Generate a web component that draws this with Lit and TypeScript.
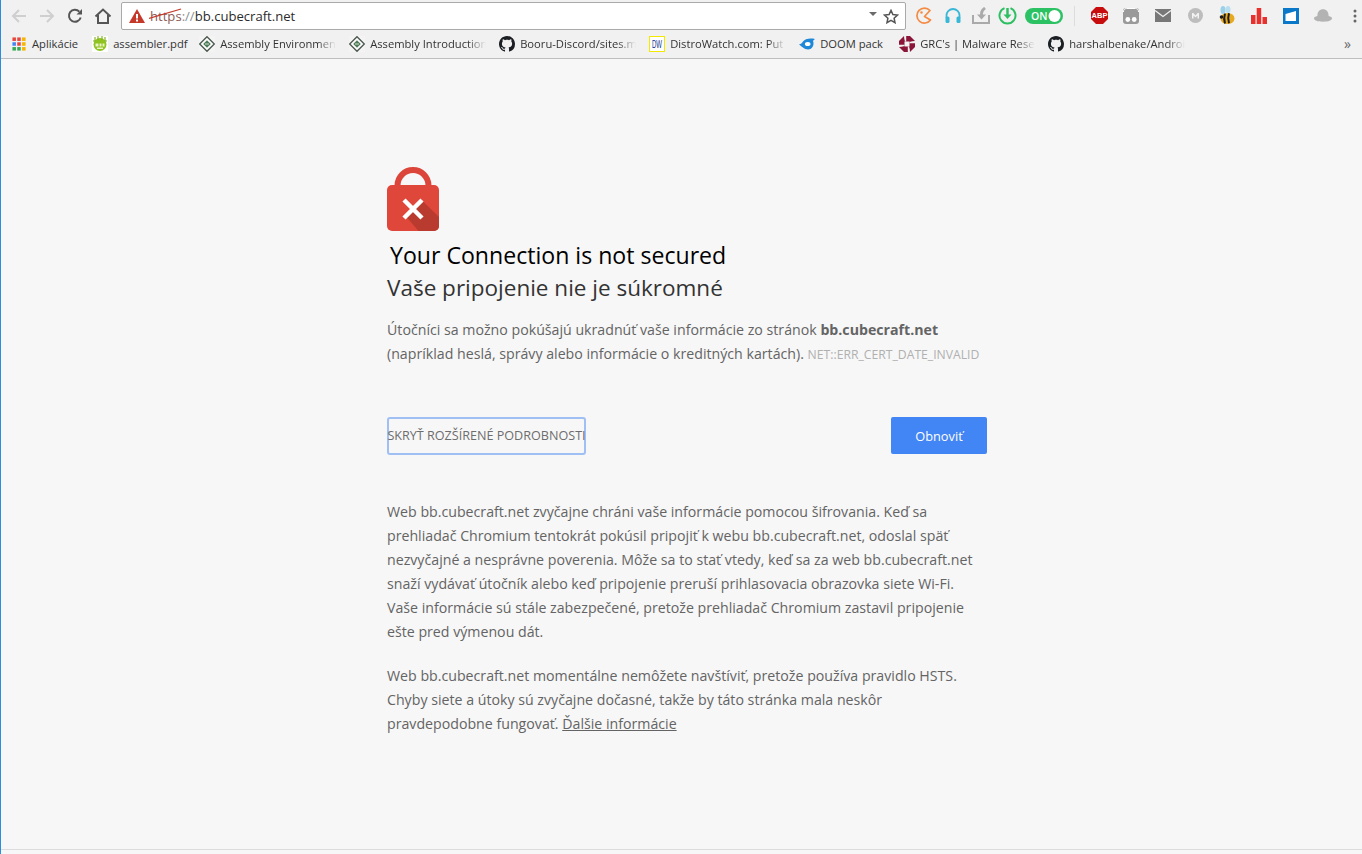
import { LitElement, html, css, svg } from "lit";
import { customElement } from "lit/decorators.js";

const GH = "M8 0C3.58 0 0 3.58 0 8c0 3.54 2.29 6.53 5.47 7.59.4.07.55-.17.55-.38 0-.19-.01-.82-.01-1.49-2.01.37-2.53-.49-2.69-.94-.09-.23-.48-.94-.82-1.13-.28-.15-.68-.52-.01-.53.63-.01 1.08.58 1.23.82.72 1.21 1.87.87 2.33.66.07-.52.28-.87.51-1.07-1.78-.2-3.64-.89-3.64-3.95 0-.87.31-1.59.82-2.15-.08-.2-.36-1.02.08-2.12 0 0 .67-.21 2.2.82.64-.18 1.32-.27 2-.27.68 0 1.36.09 2 .27 1.53-1.04 2.2-.82 2.2-.82.44 1.1.16 1.92.08 2.12.51.56.82 1.27.82 2.15 0 3.07-1.87 3.75-3.65 3.95.29.25.54.73.54 1.48 0 1.07-.01 1.93-.01 2.2 0 .21.15.46.55.38A8.013 8.013 0 0016 8c0-4.42-3.58-8-8-8z";

const fav = {
  apps: svg`${[0, 1, 2].flatMap((r) => [0, 1, 2].map((c) => svg`<rect x=${c * 5.5 + 0.5} y=${r * 5.5 + 0.5} width="4" height="4" fill=${[["#e8453c", "#e8453c", "#f4b400"], ["#4285f4", "#e8453c", "#f4b400"], ["#34a853", "#34a853", "#f4b400"]][r][c]}/>`))}`,
  asm: svg`<rect width="16" height="16" fill="#fff"/><circle cx="8" cy="8.500" r="6.500" fill="#8fc31f"/><path d="M3 1v4M6 0v4M10 0v4M13 1v4M1 5h2M13 5h2" stroke="#7fae1a" stroke-width="1.100" fill="none"/><path d="M3.500 7.500h3v3h-3zM7.500 7.500h2v3h-2zM10.500 7.500h2v3h-2zM5 11.500h6v1.500H5z" fill="#e9f4c8"/>`,
  dia: svg`<rect width="16" height="16" fill="#f4f4f4"/><path d="M8 .7 15.300 8 8 15.300.7 8z" fill="#fff" stroke="#4d5a50" stroke-width="1.400"/><path d="M8 4.200 11.800 8 8 11.800 4.200 8z" fill="#4f7a58"/><path d="M6 8h4" stroke="#cfe0d0" stroke-width="1"/>`,
  gh: svg`<path fill="#1b1f23" d=${GH}/>`,
  dw: svg`<rect x=".5" y=".5" width="15" height="15" fill="#fff" stroke="#f5e800" stroke-width="1"/><text x="3" y="12" textLength="10" lengthAdjust="spacingAndGlyphs" font-family="Liberation Sans, sans-serif" font-size="10.500" fill="#0d2f8f">DW</text>`,
  doom: svg`<path fill="#1e88d8" d="M0 8.500c2-.5 3-1.500 4-3C6 3 10 2 16 3c-1 .8-1.600 1.400-2 2 1.600 3.500-.5 8.500-5 8.500-3.500 0-6-3-9-5z"/><ellipse cx="8.700" cy="8" rx="2.800" ry="2" fill="#fff"/>`,
  grc: svg`<path fill="#8a1538" d="M5 0h6l5 5v6l-5 5H5l-5-5V5z"/><path fill="#f1f1f1" d="M5.500 5.500h5v5h-5zM10.500 5.500 16 5v1.500zM10.500 10.500 11 16H9.500zM5.500 10.500 0 11V9.500zM5.500 5.500 5 0h1.500z"/><path fill="#f1f1f1" d="M6 5.500 6 0h1.200v5.500zM10.500 6H16v1.200h-5.500zM10 10.500V16H8.800v-5.500zM5.500 10H0V8.800h5.500z"/>`,
};

const bookmarks: [keyof typeof fav, string, number, boolean][] = [
  ["asm", "assembler.pdf", 73, false],
  ["dia", "Assembly Environmen", 116, true],
  ["dia", "Assembly Introduction", 116, true],
  ["gh", "Booru-Discord/sites.m", 116, true],
  ["dw", "DistroWatch.com: Put", 116, true],
  ["doom", "DOOM pack", 66, false],
  ["grc", "GRC's | Malware Resea", 115, true],
  ["gh", "harshalbenake/Androi", 116, true],
];

@customElement("app-root")
export class AppRoot extends LitElement {
  static styles = css`
    :host {
      display: flex;
      flex-direction: column;
      width: 1362px;
      height: 854px;
      overflow: hidden;
      background: #f7f7f7;
      font-family: "Open Sans", "Noto Sans", sans-serif;
      box-sizing: border-box;
      border-left: 1px solid #2b8ce0;
    }
    .toolbar {
      display: flex;
      align-items: center;
      height: 31px;
      flex: none;
      background: #f1f1f1;
      padding-left: 4px;
    }
    .nav {
      width: 28px;
      height: 28px;
      display: flex;
      align-items: center;
      justify-content: center;
      flex: none;
    }
    .omni {
      flex: none;
      box-sizing: border-box;
      width: 785px;
      height: 28px;
      margin-left: 4px;
      margin-top: 1px;
      background: #fff;
      border: 1px solid #a9a9a9;
      border-radius: 2px;
      display: flex;
      align-items: center;
      padding: 0 6px 0 7px;
      font-size: 13.100px;
    }
    .scheme {
      position: relative;
      margin-left: 5px;
      color: #8c5a55;
    }
    .scheme svg { position: absolute; left: -1px; top: 1px; }
    .sep { color: #8a8f99; }
    .host { color: #2b2b2b; }
    .spacer { flex: 1; }
    .caret {
      width: 0;
      height: 0;
      border: 4px solid transparent;
      border-top: 4px solid #6a6a6a;
      border-bottom: 0;
      margin: 0 6px 4px 0;
    }
    .ext { display: flex; align-items: center; justify-content: center; flex: none; height: 28px; width: 28px; }
    .e-first { margin-left: 3px; }
    .e-gap2 { margin-left: 2px; }
    .e-nar { width: 24px; }
    .toggle { width: 38px; margin-left: 6px; }
    .divider { width: 1px; height: 20px; background: #dcdcdc; margin: 0 8px 0 11px; flex: none; }
    .wide { width: 32px; }
    .dots { width: 12px; margin-left: 10px; }
    .bm {
      display: flex;
      align-items: center;
      height: 25px;
      padding-bottom: 2px;
      flex: none;
      background: #f1f1f1;
      border-bottom: 1px solid #bdbdbd;
      padding-left: 11px;
      font-size: 11.200px;
      color: #333;
    }
    .bm-item { display: flex; align-items: center; gap: 5px; margin-right: 13px; flex: none; }
    .apps { gap: 6px; margin-right: 14px; }
    .bm-label { white-space: nowrap; flex: none; }
    .fade {
      -webkit-mask-image: linear-gradient(90deg, #000 84%, transparent 100%);
      mask-image: linear-gradient(90deg, #000 84%, transparent 100%);
    }
    .chev { margin-left: auto; margin-right: 11px; color: #666; font-size: 14px; }
    main {
      flex: 1;
      min-height: 0;
      padding: 108px 0 0 386px;
      border-bottom: 1px solid #dcdcdc;
      margin-bottom: 4px;
      color: #646464;
      font-size: 14.180px;
      line-height: 24px;
    }
    .wrap { width: 600px; }
    .lock { display: block; }
    h1 {
      margin: 8px 0 0 3px;
      font-size: 23.100px;
      line-height: 33px;
      font-weight: 400;
      color: #000;
      white-space: nowrap;
    }
    h2 {
      margin: 0;
      font-size: 22.500px;
      line-height: 32px;
      font-weight: 400;
      color: #333;
      white-space: nowrap;
    }
    .lead { margin: 14px 0 0; white-space: nowrap; }
    .lead b { font-weight: 700; }
    .code { font-size: 12.200px; color: #b0b0b0; }
    .actions { display: flex; justify-content: space-between; align-items: flex-start; margin-top: 50px; }
    .detail {
      box-sizing: border-box;
      width: 199px;
      height: 38px;
      border: 2px solid #9fbff5;
      border-radius: 3px;
      display: flex;
      align-items: center;
      justify-content: center;
      font-size: 12.600px;
      color: #6d6d6d;
      white-space: nowrap;
    }
    .reload {
      width: 96px;
      height: 37px;
      border-radius: 2px;
      background: #4285f4;
      color: #fff;
      display: flex;
      align-items: center;
      justify-content: center;
      font-size: 12.800px;
      font-weight: 500;
    }
    .body { margin: 45px 0 0; white-space: nowrap; }
    .body + .body { margin-top: 20px; }
    a { color: inherit; text-decoration: underline; }
  `;

  render() {
    return html`
      <div class="toolbar">
        <div class="nav">
          <svg width="18" height="18" viewBox="0 0 18 18" fill="none" stroke="#cfcfcf" stroke-width="2"><path d="M16 9H3M9 3 3 9l6 6"/></svg>
        </div>
        <div class="nav">
          <svg width="18" height="18" viewBox="0 0 18 18" fill="none" stroke="#cfcfcf" stroke-width="2"><path d="M2 9h13M9 3l6 6-6 6"/></svg>
        </div>
        <div class="nav">
          <svg width="16" height="16" viewBox="0 0 16 16" fill="none"><path d="M13.700 9.500A6 6 0 1 1 12.300 3.600" stroke="#555" stroke-width="2"/><path d="M9.500 6.500H15V1z" fill="#555"/></svg>
        </div>
        <div class="nav">
          <svg width="18" height="18" viewBox="0 0 18 18" fill="none" stroke="#555" stroke-width="2"><path d="M1.500 9.500 9 2.500l7.500 7M4 8v8h10V8"/></svg>
        </div>
        <div class="omni">
          <svg width="16" height="14" viewBox="0 0 16 14"><path d="M8 0l8 14H0z" fill="#c5392b"/><path d="M7 5h2v4.500H7zM7 10.500h2v2H7z" fill="#fff"/></svg>
          <span class="scheme">https<svg width="34" height="12" viewBox="0 0 34 12" fill="none"><path d="M0 10.500 32 1" stroke="#c5392b" stroke-width="1.300"/></svg></span><span class="sep">://</span><span class="host">bb.cubecraft.net</span>
          <span class="spacer"></span>
          <span class="caret"></span>
          <svg width="16" height="15" viewBox="0 0 16 15" fill="none"><path d="M8 1.400l1.900 4.200 4.600.5-3.400 3.100.9 4.500L8 11.400l-4 2.300.9-4.500L1.500 6.100l4.600-.5z" stroke="#555" stroke-width="1.500"/></svg>
        </div>
        <div class="ext e-first">
          <svg width="17" height="17" viewBox="0 0 17 17" fill="none"><path d="M15 3.500A7.500 7.500 0 1 0 15.500 13L9.500 9.500z" stroke="#f58a42" stroke-width="1.700" stroke-linejoin="round"/><circle cx="6.500" cy="5.500" r="1.200" fill="#f58a42"/></svg>
        </div>
        <div class="ext e-gap2">
          <svg width="18" height="17" viewBox="0 0 17 17" fill="none"><path d="M2 11V8.500a6.500 6.500 0 0 1 13 0V11" stroke="#39b7d6" stroke-width="1.800"/><rect x="1" y="9.500" width="4" height="6.500" rx="1.500" fill="#39b7d6"/><rect x="12" y="9.500" width="4" height="6.500" rx="1.500" fill="#39b7d6"/></svg>
        </div>
        <div class="ext">
          <svg width="18" height="17" viewBox="0 0 18 17" fill="none"><path d="M1 8v8h16V8" stroke="#aaa" stroke-width="2"/><path d="M9.500 9V6.500C9.500 4 11 2.500 13 1" stroke="#aaa" stroke-width="2.800"/><path d="M5 7.500l4.500 5 4.500-5z" fill="#aaa"/></svg>
        </div>
        <div class="ext e-nar">
          <svg width="19" height="19" viewBox="0 0 19 19" fill="none"><path d="M12.500 2.100A8 8 0 1 1 6.500 2.100" stroke="#2fbf63" stroke-width="2"/><path d="M9.500 2v9" stroke="#2fbf63" stroke-width="2.500"/><path d="M5.500 8.500l4 4.500 4-4.500z" fill="#2fbf63"/></svg>
        </div>
        <div class="ext toggle">
          <svg width="38" height="16" viewBox="0 0 38 16"><rect width="38" height="16" rx="8" fill="#2cc264"/><circle cx="29.500" cy="8" r="6" fill="#fff"/><text x="6" y="12" font-family="Open Sans, sans-serif" font-size="10.500" font-weight="600" fill="#fff">ON</text></svg>
        </div>
        <div class="divider"></div>
        <div class="ext wide">
          <svg width="17" height="17" viewBox="0 0 17 17"><path d="M5 0h7l5 5v7l-5 5H5l-5-5V5z" fill="#c70d0d"/><text x="8.500" y="11.300" text-anchor="middle" font-family="Liberation Sans, sans-serif" font-size="7.500" font-weight="700" fill="#fff">ABP</text></svg>
        </div>
        <div class="ext wide">
          <svg width="16" height="16" viewBox="0 0 16 16"><rect width="16" height="16" rx="3" fill="#9a9a9a"/><path d="M.5 4a3 3 0 0 1 3-3.500h9a3 3 0 0 1 3 3.500" fill="none" stroke="#fff" stroke-width="1"/><circle cx="4.800" cy="11.500" r="2.400" fill="#fff"/><circle cx="11.200" cy="11.500" r="2.400" fill="#fff"/></svg>
        </div>
        <div class="ext wide">
          <svg width="16" height="13" viewBox="0 0 16 13"><rect width="16" height="13" fill="#777"/><path d="M0 1.500l8 6 8-6" fill="none" stroke="#f1f1f1" stroke-width="1.300"/></svg>
        </div>
        <div class="ext wide">
          <svg width="15" height="15" viewBox="0 0 15 15"><circle cx="7.500" cy="7.500" r="7.500" fill="#bdbdbd"/><path d="M4 10.500V5h1.300l2.200 2.500L9.700 5H11v5.500H9.500V7.500l-2 2-2-2v3z" fill="#f4f4f4"/></svg>
        </div>
        <div class="ext wide">
          <svg width="16" height="19" viewBox="0 0 16 19"><ellipse cx="8.500" cy="12.500" rx="7" ry="5.500" fill="#e6a91f"/><path d="M6 7.500c-1 3-1 7 0 10M10 7.300c-1 3-1 7 0 10" stroke="#1c1c1c" stroke-width="2" fill="none"/><ellipse cx="4" cy="4" rx="2.500" ry="4" fill="#9ad0e8"/><ellipse cx="9" cy="3.500" rx="2.500" ry="3.500" fill="#b7def0"/><circle cx="2.500" cy="11" r="1.800" fill="#1c1c1c"/></svg>
        </div>
        <div class="ext wide">
          <svg width="16" height="16" viewBox="0 0 16 16" fill="#e8302c"><rect y="7" width="4.500" height="9"/><rect x="5.700" width="4.500" height="16"/><rect x="11.500" y="9" width="4.500" height="7"/></svg>
        </div>
        <div class="ext wide">
          <svg width="16" height="16" viewBox="0 0 16 16"><rect width="16" height="16" fill="#0a78c8"/><path d="M2.500 6 13 3v10H2.500z" fill="#fff"/></svg>
        </div>
        <div class="ext wide">
          <svg width="18" height="13" viewBox="0 0 16 11" fill="#b3b3b3"><path d="M3 6C3 2 5 0 8 0s5 2 5 6c2 .5 3 1 3 2 0 2-3 3-8 3S0 10 0 8c0-1 1-1.500 3-2z"/></svg>
        </div>
        <div class="ext dots">
          <svg width="4" height="14" viewBox="0 0 4 14" fill="#666"><circle cx="2" cy="2" r="1.500"/><circle cx="2" cy="7" r="1.500"/><circle cx="2" cy="12" r="1.500"/></svg>
        </div>
      </div>
      <div class="bm">
        <div class="bm-item apps">
          <svg width="14" height="14" viewBox="0 0 16 16">${fav.apps}</svg>
          <span class="bm-label">Aplikácie</span>
        </div>
        ${bookmarks.map(
          ([ic, label, w, faded]) => html`
            <div class="bm-item">
              <svg width="16" height="16" viewBox="0 0 16 16">${fav[ic]}</svg>
              <span class="bm-label ${faded ? "fade" : ""}" style="width:${w}px">${label}</span>
            </div>
          `
        )}
        <span class="chev">»</span>
      </div>
      <main>
        <div class="wrap">
          <svg class="lock" width="52" height="64" viewBox="0 0 52 64" fill="none">
            <defs><clipPath id="lb"><rect y="18" width="52" height="46" rx="5"/></clipPath></defs>
            <path d="M10.500 22V18.500a15.500 15.500 0 0 1 31 0V22" stroke="#dc4539" stroke-width="6"/>
            <rect y="18" width="52" height="46" rx="5" fill="#e0473b"/>
            <path clip-path="url(#lb)" d="M33 31.500 52 50V64H31.500L19.500 50z" fill="#b93a2e"/>
            <path d="M17 33 35 51M35 33 17 51" stroke="#fff" stroke-width="4.500"/>
          </svg>
          <h1>Your Connection is not secured</h1>
          <h2>Vaše pripojenie nie je súkromné</h2>
          <p class="lead">Útočníci sa možno pokúšajú ukradnúť vaše informácie zo stránok <b>bb.cubecraft.net</b><br />(napríklad heslá, správy alebo informácie o kreditných kartách). <span class="code">NET::ERR_CERT_DATE_INVALID</span></p>
          <div class="actions">
            <div class="detail">SKRYŤ ROZŠÍRENÉ PODROBNOSTI</div>
            <div class="reload">Obnoviť</div>
          </div>
          <p class="body">Web bb.cubecraft.net zvyčajne chráni vaše informácie pomocou šifrovania. Keď sa<br />prehliadač Chromium tentokrát pokúsil pripojiť k webu bb.cubecraft.net, odoslal späť<br />nezvyčajné a nesprávne poverenia. Môže sa to stať vtedy, keď sa za web bb.cubecraft.net<br />snaží vydávať útočník alebo keď pripojenie preruší prihlasovacia obrazovka siete Wi-Fi.<br />Vaše informácie sú stále zabezpečené, pretože prehliadač Chromium zastavil pripojenie<br />ešte pred výmenou dát.</p>
          <p class="body">Web bb.cubecraft.net momentálne nemôžete navštíviť, pretože používa pravidlo HSTS.<br />Chyby siete a útoky sú zvyčajne dočasné, takže by táto stránka mala neskôr<br />pravdepodobne fungovať. <a>Ďalšie informácie</a></p>
        </div>
      </main>
    `;
  }
}
